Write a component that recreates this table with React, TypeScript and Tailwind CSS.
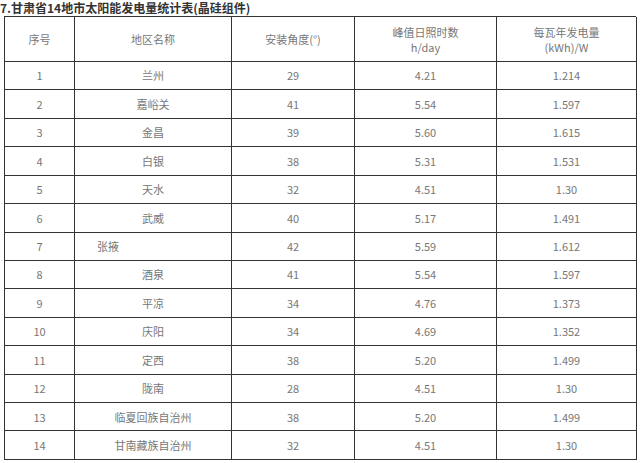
import React from "react";

const rows: [string, string, string, string, string][] = [
  ["1", "兰州", "29", "4.21", "1.214"],
  ["2", "嘉峪关", "41", "5.54", "1.597"],
  ["3", "金昌", "39", "5.60", "1.615"],
  ["4", "白银", "38", "5.31", "1.531"],
  ["5", "天水", "32", "4.51", "1.30"],
  ["6", "武威", "40", "5.17", "1.491"],
  ["7", "张掖", "42", "5.59", "1.612"],
  ["8", "酒泉", "41", "5.54", "1.597"],
  ["9", "平凉", "34", "4.76", "1.373"],
  ["10", "庆阳", "34", "4.69", "1.352"],
  ["11", "定西", "38", "5.20", "1.499"],
  ["12", "陇南", "28", "4.51", "1.30"],
  ["13", "临夏回族自治州", "38", "5.20", "1.499"],
  ["14", "甘南藏族自治州", "32", "4.51", "1.30"],
];

const cell =
  "flex items-center justify-center border-r border-b border-[#333] text-[11px] text-[#777]";

export default function App() {
  return (
    <div
      className="w-[640px] h-[463px] bg-white overflow-hidden"
      style={{ fontFamily: '"Noto Sans CJK SC", "Noto Sans", sans-serif' }}
    >
      <div className="h-[16px] flex items-center text-[12px] font-bold text-[#333] leading-none">
        7.甘肃省14地市太阳能发电量统计表(晶硅组件)
      </div>
      <div className="ml-[4px] w-[632px] grid grid-cols-[70px_157px_123px_142px_140px] grid-rows-[45px_repeat(14,28.43px)] border-l border-t border-[#333]">
        <div className={cell}>序号</div>
        <div className={cell}>地区名称</div>
        <div className={cell}>安装角度(°)</div>
        <div className={`${cell} flex-col leading-[15px] pt-[2px]`}>
          <span>峰值日照时数</span>
          <span>h/day</span>
        </div>
        <div className={`${cell} flex-col leading-[15px] pt-[2px]`}>
          <span>每瓦年发电量</span>
          <span>(kWh)/W</span>
        </div>
        {rows.map((r) => (
          <React.Fragment key={r[0]}>
            <div className={cell}>{r[0]}</div>
            {r[0] === "7" ? (
              <div className="flex items-center justify-start pl-[22px] border-r border-b border-[#333] text-[11px] text-[#777]">
                {r[1]}
              </div>
            ) : (
              <div className={cell}>{r[1]}</div>
            )}
            <div className={cell}>{r[2]}</div>
            <div className={cell}>{r[3]}</div>
            <div className={cell}>{r[4]}</div>
          </React.Fragment>
        ))}
      </div>
    </div>
  );
}
